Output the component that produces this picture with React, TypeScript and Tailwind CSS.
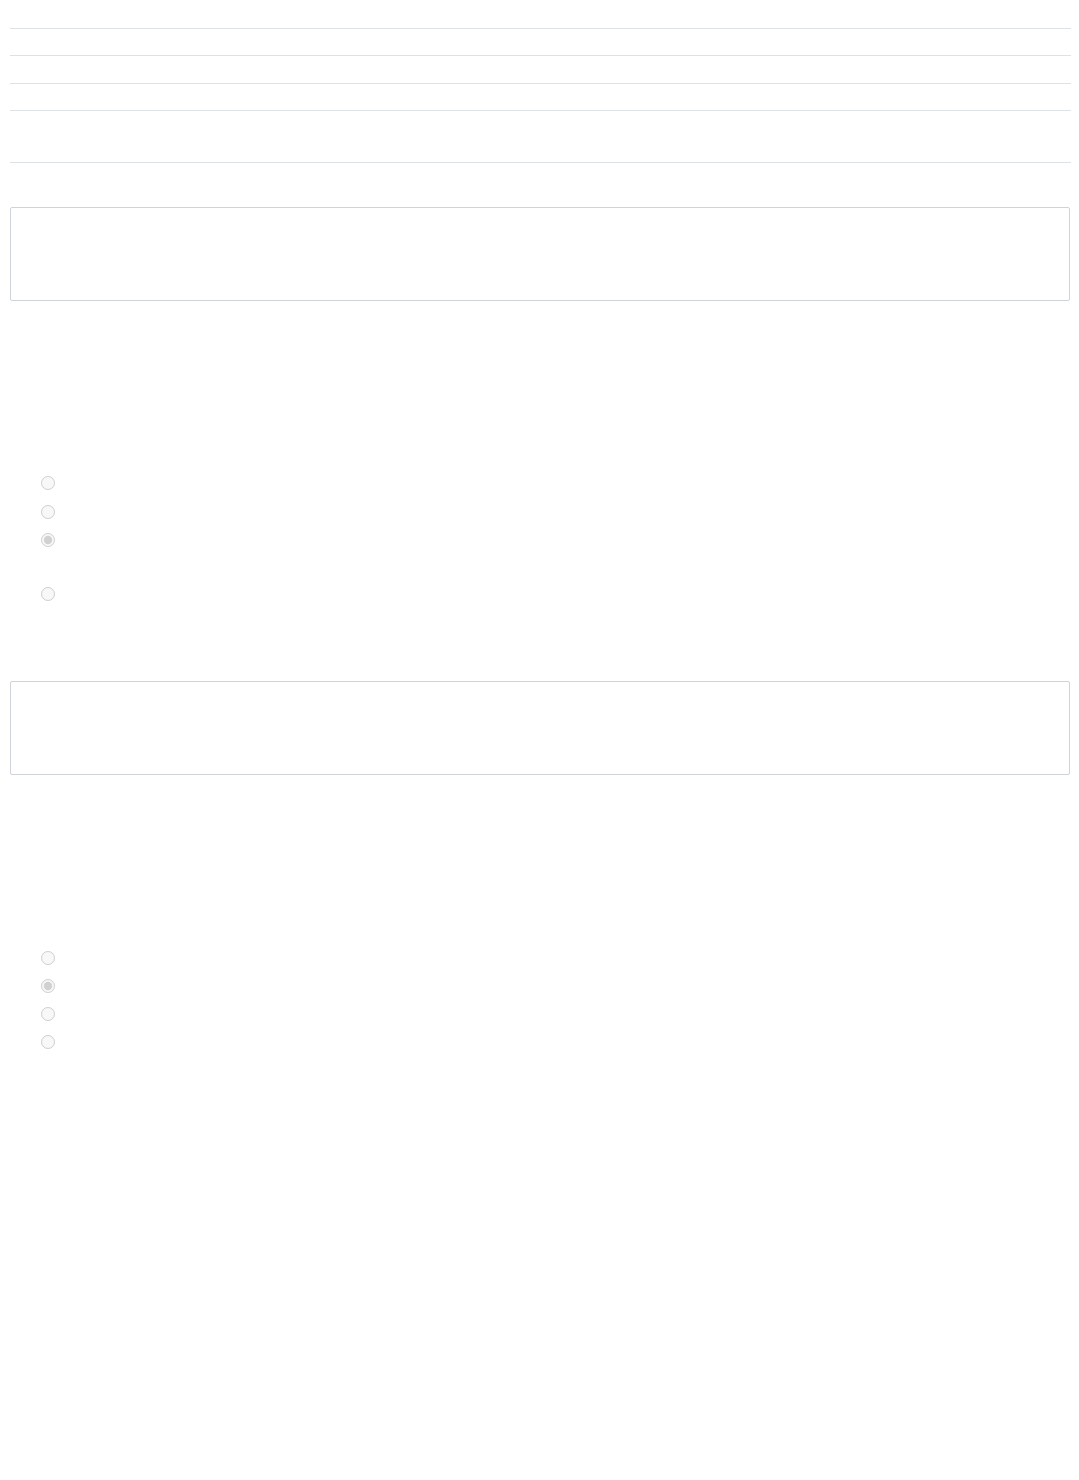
import React from "react";

function Radio({ checked, h }: { checked?: boolean; h: string }) {
  return (
    <div className={`flex items-center pl-[31px] ${h}`}>
      <input
        type="radio"
        disabled
        defaultChecked={checked}
        className="m-0 h-[14px] w-[14px]"
      />
    </div>
  );
}

export default function App() {
  return (
    <div className="min-h-[1480px] bg-white pl-[10px] pr-[8px] font-['Liberation_Sans',sans-serif] text-transparent">
      <div className="h-[29px] border-b border-[#dee2e6]" />
      <div className="h-[27px] border-b border-[#dee2e6]" />
      <div className="h-[28px] border-b border-[#dee2e6]" />
      <div className="h-[27px] border-b border-[#dee2e6]" />
      <div className="h-[52px] border-b border-[#dee2e6]" />

      <div className="mt-[44px] mr-[1px] h-[94px] rounded-[2px] border border-[#ced4da]" />

      <div className="mt-[168px] flex flex-col">
        <Radio h="h-[28px]" />
        <Radio h="h-[29px]" />
        <Radio h="h-[28px]" checked />
        <div className="h-[26px]" />
        <Radio h="h-[28px]" />
      </div>

      <div className="mt-[73px] mr-[1px] h-[94px] rounded-[2px] border border-[#ced4da]" />

      <div className="mt-[168px] flex flex-col">
        <Radio h="h-[29px]" />
        <Radio h="h-[28px]" checked />
        <Radio h="h-[28px]" />
        <Radio h="h-[28px]" />
      </div>
    </div>
  );
}
